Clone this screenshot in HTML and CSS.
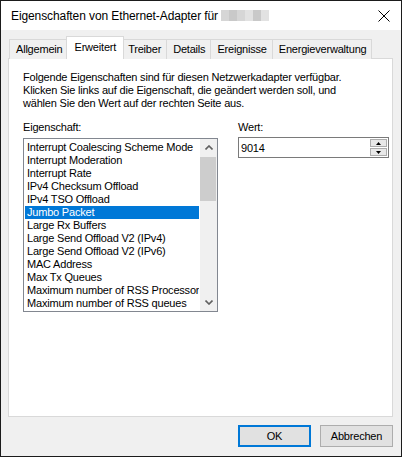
FILE: index.html
```html
<!DOCTYPE html>
<html>
<head>
<meta charset="utf-8">
<link rel="stylesheet" href="styles.css">
</head>
<body>
<div class="dlg">
  <div class="titlebar">
    <span class="title">Eigenschaften von Ethernet-Adapter für</span>
    <span class="blur"><i class="b1"></i><i class="b2"></i><i class="b1"></i><i class="b3"></i><i class="b2"></i><i class="b3"></i></span>
    <svg class="close" width="12" height="12" viewBox="0 0 12 12"><path d="M0.5 0.5 L11.5 11.5 M11.5 0.5 L0.5 11.5" stroke="#000" stroke-width="1" fill="none"/></svg>
  </div>
  <div class="body">
    <div class="tabs">
      <div class="tab">Allgemein</div>
      <div class="tab active">Erweitert</div>
      <div class="tab">Treiber</div>
      <div class="tab">Details</div>
      <div class="tab">Ereignisse</div>
      <div class="tab">Energieverwaltung</div>
    </div>
    <div class="panel">
      <p class="intro">Folgende Eigenschaften sind für diesen Netzwerkadapter verfügbar.<br>Klicken Sie links auf die Eigenschaft, die geändert werden soll, und<br>wählen Sie den Wert auf der rechten Seite aus.</p>
      <div class="cols">
        <div class="col-left">
          <div class="label">Eigenschaft:</div>
          <div class="listbox">
            <ul class="items">
              <li>Interrupt Coalescing Scheme Mode</li>
              <li>Interrupt Moderation</li>
              <li>Interrupt Rate</li>
              <li>IPv4 Checksum Offload</li>
              <li>IPv4 TSO Offload</li>
              <li class="sel">Jumbo Packet</li>
              <li>Large Rx Buffers</li>
              <li>Large Send Offload V2 (IPv4)</li>
              <li>Large Send Offload V2 (IPv6)</li>
              <li>MAC Address</li>
              <li>Max Tx Queues</li>
              <li>Maximum number of RSS Processors</li>
              <li>Maximum number of RSS queues</li>
            </ul>
            <div class="vscroll">
              <div class="arrow"><svg width="8" height="5" viewBox="0 0 8 5"><path d="M0.5 4.5 L4 1 L7.5 4.5" stroke="#606060" stroke-width="1.6" fill="none"/></svg></div>
              <div class="track"><div class="thumb"></div></div>
              <div class="arrow"><svg width="8" height="5" viewBox="0 0 8 5"><path d="M0.5 0.5 L4 4 L7.5 0.5" stroke="#606060" stroke-width="1.6" fill="none"/></svg></div>
            </div>
          </div>
        </div>
        <div class="col-right">
          <div class="label">Wert:</div>
          <div class="edit">
            <span class="val">9014</span>
            <div class="spin">
              <div class="sbtn"><svg width="5" height="3" viewBox="0 0 5 3"><path d="M0 3 L2.5 0 L5 3 Z" fill="#000"/></svg></div>
              <div class="sbtn"><svg width="5" height="3" viewBox="0 0 5 3"><path d="M0 0 L5 0 L2.5 3 Z" fill="#000"/></svg></div>
            </div>
          </div>
        </div>
      </div>
    </div>
    <div class="footer">
      <div class="btn default">OK</div>
      <div class="btn">Abbrechen</div>
    </div>
  </div>
</div>
</body>
</html>
```
FILE: styles.css
```css
* { box-sizing: border-box; }
html, body { margin: 0; padding: 0; background: #fff; }
body { font-family: "Liberation Sans", Arial, sans-serif; font-size: 11px; letter-spacing: -0.2px; color: #000; }

.dlg {
  width: 402px;
  height: 457px;
  border: 1px solid #1b1b1b;
  background: #f0f0f0;
  display: flex;
  flex-direction: column;
}

.titlebar {
  height: 29px;
  background: #fff;
  display: flex;
  align-items: center;
  padding-left: 10px;
  padding-right: 11px;
}
.title { font-size: 12px; letter-spacing: -0.1px; white-space: nowrap; }
.blur { display: flex; margin-left: 3px; height: 11px; }
.blur i { display: block; width: 8px; height: 11px; }
.blur .b1 { background: #d6d6d6; }
.blur .b2 { background: #c9c9c9; }
.blur .b3 { background: #e2e2e2; }
.close { margin-left: auto; }

.body {
  flex: 1;
  display: flex;
  flex-direction: column;
  padding: 0 8px 0 7px;
}

.tabs {
  display: flex;
  align-items: flex-end;
  margin-top: 6px;
  margin-bottom: -1px;
  padding-left: 2px;
  position: relative;
  z-index: 1;
}
.tab {
  height: 20px;
  line-height: 19px;
  padding: 0 5px 0 6px;
  border: 1px solid #d9d9d9;
  border-bottom: none;
  margin-left: -1px;
  background: #f0f0f0;
  white-space: nowrap;
}
.tab.active {
  height: 23px;
  line-height: 20px;
  background: #fff;
  margin: 0 -2px 0 -3px;
  padding: 0 7px 0 8px;
  position: relative;
  z-index: 2;
}

.panel {
  height: 359px;
  background: #fff;
  border: 1px solid #d9d9d9;
  padding: 12px 0 0 14px;
}
.intro { margin: 0; line-height: 13px; white-space: nowrap; }

.cols {
  display: flex;
  gap: 20px;
  margin-top: 11px;
}
.label { line-height: 13px; }

.col-left .label { margin-bottom: 4px; }
.listbox {
  width: 195px;
  height: 174px;
  border: 1px solid #828790;
  display: flex;
  padding: 0 0 0 1px;
}
.items {
  list-style: none;
  margin: 0;
  padding: 2px 0 0 0;
  width: 174px;
}
.items li {
  height: 13px;
  line-height: 13px;
  padding-left: 2px;
  white-space: nowrap;
  overflow: hidden;
  text-overflow: clip;
}
.items li.sel { background: #0078d7; color: #fff; }

.vscroll {
  margin-left: 1px;
  width: 17px;
  background: #f0f0f0;
  display: flex;
  flex-direction: column;
}
.arrow {
  height: 17px;
  display: flex;
  align-items: center;
  justify-content: center;
}
.track { flex: 1; padding-top: 1px; }
.thumb { height: 44px; background: #cdcdcd; margin: 0 1px 0 0; }

.col-right .label { margin-bottom: 3px; }
.edit {
  width: 151px;
  height: 21px;
  border: 1px solid #7a7a7a;
  background: #fff;
  display: flex;
  align-items: center;
  padding: 0 1px 0 2px;
}
.val { flex: 1; }
.spin { display: flex; flex-direction: column; gap: 1px; }
.sbtn {
  width: 17px;
  height: 8px;
  border: 1px solid #acacac;
  background: #e8e8e8;
  display: flex;
  align-items: center;
  justify-content: center;
}

.footer {
  display: flex;
  justify-content: flex-end;
  gap: 9px;
  margin-top: 8px;
}
.btn {
  width: 73px;
  height: 22px;
  border: 1px solid #adadad;
  background: #e1e1e1;
  display: flex;
  align-items: center;
  justify-content: center;
}
.btn.default { border: 2px solid #0078d7; }
```
